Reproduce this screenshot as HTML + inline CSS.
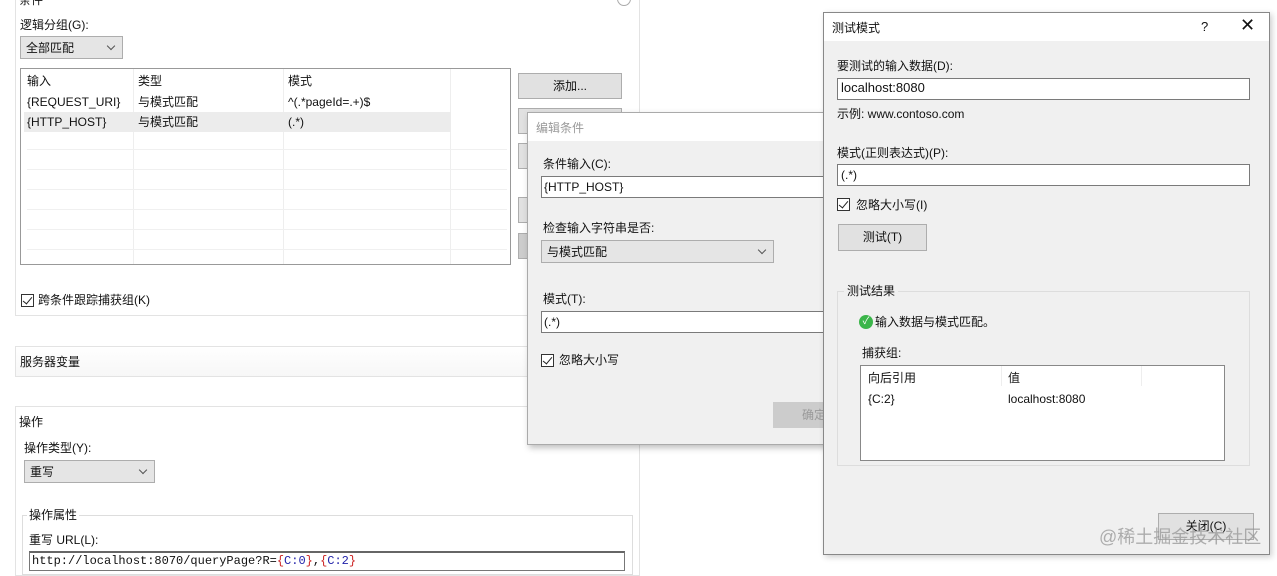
<!DOCTYPE html>
<html><head><meta charset="utf-8"><style>
*{box-sizing:border-box;margin:0;padding:0}
body{width:1277px;height:564px;overflow:hidden;background:#fff;font-family:"Liberation Sans","Noto Sans CJK SC",sans-serif;font-size:12px;line-height:14px;color:#111;position:relative}
.a{position:absolute;white-space:nowrap}
.inp{position:absolute;background:#fff;border:1px solid #7a7a7a;height:22px;padding:3px 3px;}
.sel{position:absolute;background:#e5e5e5;border:1px solid #adadad;height:23px;padding:4px 5px}
.sel:after{content:"";position:absolute;right:8px;top:6px;width:5px;height:5px;border-right:1px solid #555;border-bottom:1px solid #555;transform:rotate(45deg)}
.btn{position:absolute;background:#e1e1e1;border:1px solid #adadad;text-align:center;padding-top:5px}
.cb{position:absolute;width:13px;height:13px;border:1px solid #333;background:#fff}
.cb:after{content:"";position:absolute;left:3px;top:0px;width:4px;height:8px;border-right:1.3px solid #222;border-bottom:1.3px solid #222;transform:rotate(40deg)}
</style></head><body>
<div class="a" style="left:15px;top:-5px;width:625px;height:321px;border:1px solid #e3e3e3;border-top:none"></div>
<div class="a" style="left:19px;top:-7px">条件</div>
<div class="a" style="left:617px;top:-8px;width:14px;height:14px;border:1px solid #aaa;border-radius:50%"></div>
<div class="a" style="left:20px;top:18px">逻辑分组(G):</div>
<div class="sel" style="left:20px;top:36px;width:103px">全部匹配</div>
<div class="a" style="left:20px;top:68px;width:491px;height:197px;border:1px solid #999;background:#fff">
 <div class="a" style="left:112px;top:0;width:1px;height:195px;background:#eee"></div>
 <div class="a" style="left:262px;top:0;width:1px;height:195px;background:#eee"></div>
 <div class="a" style="left:429px;top:0;width:1px;height:195px;background:#eee"></div>
 <div class="a" style="left:3px;top:43px;width:427px;height:20px;background:#ececec"></div>
 <div class="a" style="left:6px;top:80px;width:480px;height:1px;background:#f0f0f0"></div>
 <div class="a" style="left:6px;top:100px;width:480px;height:1px;background:#f0f0f0"></div>
 <div class="a" style="left:6px;top:120px;width:480px;height:1px;background:#f0f0f0"></div>
 <div class="a" style="left:6px;top:140px;width:480px;height:1px;background:#f0f0f0"></div>
 <div class="a" style="left:6px;top:160px;width:480px;height:1px;background:#f0f0f0"></div>
 <div class="a" style="left:6px;top:180px;width:480px;height:1px;background:#f0f0f0"></div>
 <div class="a" style="left:6px;top:5px">输入</div><div class="a" style="left:117px;top:5px">类型</div><div class="a" style="left:267px;top:5px">模式</div>
 <div class="a" style="left:6px;top:26px">{REQUEST_URI}</div><div class="a" style="left:117px;top:26px">与模式匹配</div><div class="a" style="left:267px;top:26px">^(.*pageId=.+)$</div>
 <div class="a" style="left:6px;top:46px">{HTTP_HOST}</div><div class="a" style="left:117px;top:46px">与模式匹配</div><div class="a" style="left:267px;top:46px">(.*)</div>
</div>
<div class="btn" style="left:518px;top:73px;width:104px;height:26px">添加...</div>
<div class="btn" style="left:518px;top:108px;width:104px;height:26px"></div>
<div class="btn" style="left:518px;top:143px;width:104px;height:26px"></div>
<div class="btn" style="left:518px;top:197px;width:104px;height:26px"></div>
<div class="btn" style="left:518px;top:233px;width:104px;height:26px;background:#ccc"></div>
<div class="cb" style="left:21px;top:294px"></div>
<div class="a" style="left:38px;top:293px">跨条件跟踪捕获组(K)</div>
<div class="a" style="left:15px;top:346px;width:625px;height:31px;border:1px solid #e3e3e3;background:linear-gradient(#fff,#f7f7f7)"></div>
<div class="a" style="left:20px;top:355px">服务器变量</div>
<div class="a" style="left:15px;top:406px;width:625px;height:170px;border:1px solid #e3e3e3"></div>
<div class="a" style="left:19px;top:415px">操作</div>
<div class="a" style="left:24px;top:441px">操作类型(Y):</div>
<div class="sel" style="left:24px;top:460px;width:131px">重写</div>
<div class="a" style="left:22px;top:515px;width:611px;height:60px;border:1px solid #ddd"></div>
<div class="a" style="left:27px;top:508px;background:#fff;padding:0 2px">操作属性</div>
<div class="a" style="left:29px;top:533px">重写 URL(L):</div>
<div class="a" style="left:29px;top:551px;width:596px;height:20px;border:1px solid #777;border-top:2px solid #666;background:#fff;font-family:'Liberation Mono',monospace;font-size:12px;padding:1px 2px">http://localhost:8070/queryPage?R=<span style="color:#c22">{</span><span style="color:#22a">C:0</span><span style="color:#c22">}</span>,<span style="color:#c22">{</span><span style="color:#22a">C:2</span><span style="color:#c22">}</span></div>
<div class="a" style="left:527px;top:112px;width:300px;height:333px;background:#f0f0f0;border:1px solid #aaa;box-shadow:2px 3px 6px rgba(0,0,0,.25)">
 <div class="a" style="left:0;top:0;width:300px;height:28px;background:#fff"></div>
 <div class="a" style="left:8px;top:8px;color:#999">编辑条件</div>
 <div class="a" style="left:15px;top:44px">条件输入(C):</div>
 <div class="inp" style="left:13px;top:63px;width:290px;padding-left:2px">{HTTP_HOST}</div>
 <div class="a" style="left:15px;top:108px">检查输入字符串是否:</div>
 <div class="sel" style="left:13px;top:127px;width:233px">与模式匹配</div>
 <div class="a" style="left:15px;top:179px">模式(T):</div>
 <div class="inp" style="left:13px;top:198px;width:290px;padding-left:2px">(.*)</div>
 <div class="cb" style="left:13px;top:241px"></div>
 <div class="a" style="left:31px;top:240px">忽略大小写</div>
 <div class="btn" style="left:245px;top:289px;width:70px;height:26px;background:#ccc;color:#999;border-color:#ccc;text-align:left;padding-left:28px">确定</div>
</div>
<div class="a" style="left:823px;top:12px;width:447px;height:543px;background:#f0f0f0;border:1px solid #888;box-shadow:2px 2px 6px rgba(0,0,0,.2)">
 <div class="a" style="left:0;top:0;width:445px;height:28px;background:#fff"></div>
 <div class="a" style="left:8px;top:8px">测试模式</div>
 <div class="a" style="left:377px;top:7px;font-size:13px">?</div>
 <div class="a" style="left:416px;top:5px;font-size:18px;font-weight:300">✕</div>
 <div class="a" style="left:13px;top:46px">要测试的输入数据(D):</div>
 <div class="inp" style="left:13px;top:65px;width:413px;font-size:13px;padding:2px 3px">localhost:8080</div>
 <div class="a" style="left:13px;top:94px">示例: www.contoso.com</div>
 <div class="a" style="left:13px;top:133px">模式(正则表达式)(P):</div>
 <div class="inp" style="left:13px;top:151px;width:413px">(.*)</div>
 <div class="cb" style="left:13px;top:185px"></div>
 <div class="a" style="left:32px;top:185px">忽略大小写(I)</div>
 <div class="btn" style="left:14px;top:211px;width:89px;height:27px">测试(T)</div>
 <div class="a" style="left:13px;top:278px;width:413px;height:175px;border:1px solid #ddd"></div>
 <div class="a" style="left:20px;top:271px;background:#f0f0f0;padding:0 3px">测试结果</div>
 <div class="a" style="left:35px;top:302px;width:14px;height:14px;border-radius:50%;background:#3bb54a;color:#fff;font-size:10px;text-align:center;line-height:14px">✓</div>
 <div class="a" style="left:51px;top:302px">输入数据与模式匹配。</div>
 <div class="a" style="left:38px;top:333px">捕获组:</div>
 <div class="a" style="left:36px;top:352px;width:365px;height:96px;border:1px solid #888;background:#fff">
  <div class="a" style="left:140px;top:0;width:1px;height:20px;background:#eee"></div>
  <div class="a" style="left:280px;top:0;width:1px;height:20px;background:#eee"></div>
  <div class="a" style="left:7px;top:5px">向后引用</div><div class="a" style="left:147px;top:5px">值</div>
  <div class="a" style="left:7px;top:26px">{C:2}</div><div class="a" style="left:147px;top:26px">localhost:8080</div>
 </div>
 <div class="btn" style="left:334px;top:500px;width:96px;height:27px">关闭(C)</div>
</div>
<div class="a" style="left:1099px;top:527px;font-size:18px;line-height:20px;color:rgba(150,150,150,.75)">@稀土掘金技术社区</div>
</body></html>
